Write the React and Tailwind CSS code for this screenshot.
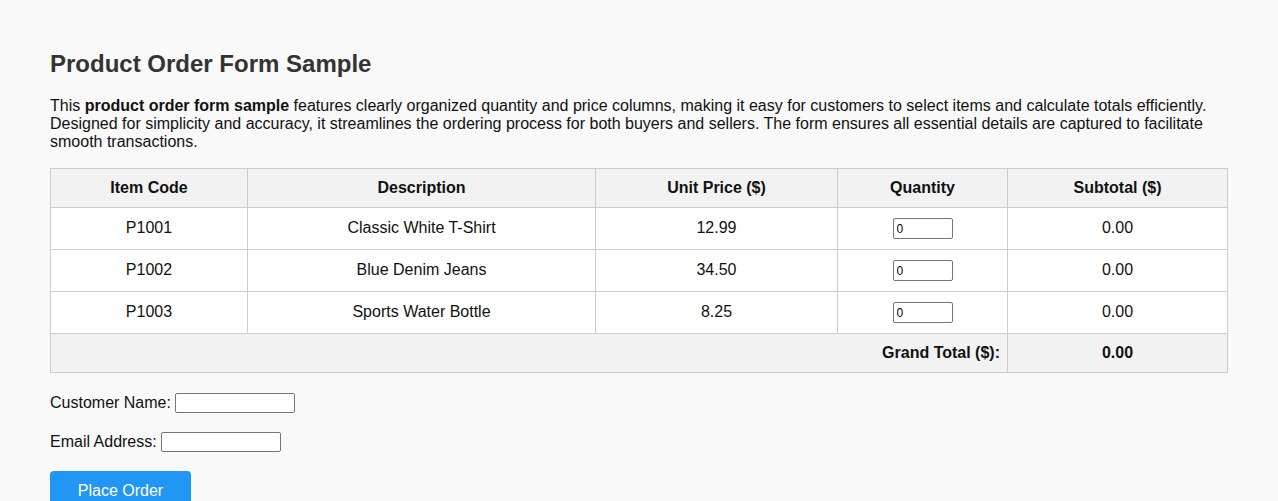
export default function App() {
  const rows = [
    ["P1001", "Classic White T-Shirt", "12.99"],
    ["P1002", "Blue Denim Jeans", "34.50"],
    ["P1003", "Sports Water Bottle", "8.25"],
  ];
  const cell = "border border-[#cccccc] px-[10px] py-[10px] text-center";
  const bodyCell = "border border-[#cccccc] px-[10px] pt-[9px] pb-[11px] text-center";
  return (
    <div className="min-h-[501px] bg-[#f9f9f9] px-[50px] pt-[50px] pb-[20px] text-[16px] text-[#111] font-['Liberation_Sans',Arial,sans-serif]">
      <h2 className="text-[24px] font-bold text-[#333333] leading-[28px] mb-[19px]">Product Order Form Sample</h2>
      <p className="leading-[18px] mb-[17px] text-[#111]">
        This <strong>product order form sample</strong> features clearly organized quantity and price columns, making it easy for customers to select items and calculate totals efficiently. Designed for simplicity and accuracy, it streamlines the ordering process for both buyers and sellers. The form ensures all essential details are captured to facilitate smooth transactions.
      </p>
      <table className="w-full border-collapse border border-[#cccccc] bg-white leading-[18px]">
        <thead>
          <tr className="bg-[#f2f2f2]">
            <th className={cell + " w-[197px] font-bold"}>Item Code</th>
            <th className={cell + " w-[348px] font-bold"}>Description</th>
            <th className={cell + " w-[242px] font-bold"}>Unit Price ($)</th>
            <th className={cell + " w-[170px] font-bold"}>Quantity</th>
            <th className={cell + " font-bold"}>Subtotal ($)</th>
          </tr>
        </thead>
        <tbody>
          {rows.map((r) => (
            <tr key={r[0]} className="h-[42px]">
              <td className={bodyCell}>{r[0]}</td>
              <td className={bodyCell}>{r[1]}</td>
              <td className={bodyCell}>{r[2]}</td>
              <td className={cell + " py-0"}>
                <input
                  type="text"
                  defaultValue="0"
                  className="w-[60px] h-[21px] border border-[#767676] rounded-[2px] bg-white px-[3px] text-[12px] leading-[14px] text-black align-middle"
                />
              </td>
              <td className={bodyCell}>0.00</td>
            </tr>
          ))}
          <tr className="bg-[#f2f2f2]">
            <td colSpan={4} className={cell + " text-right font-bold pr-[7px]"}>Grand Total ($):</td>
            <td className={cell + " font-bold"}>0.00</td>
          </tr>
        </tbody>
      </table>
      <div className="mt-[20px] flex items-center h-[20px]">
        <label className="leading-[18px]">Customer Name:</label>
        <input type="text" className="ml-[4px] w-[120px] h-[20px] border border-[#767676] rounded-[2px] bg-white" />
      </div>
      <div className="mt-[19px] flex items-center h-[20px]">
        <label className="leading-[18px]">Email Address:</label>
        <input type="text" className="ml-[4px] w-[120px] h-[20px] border border-[#767676] rounded-[2px] bg-white" />
      </div>
      <button className="mt-[19px] w-[141px] h-[40px] rounded-[4px] bg-[#2196f3] text-white text-[16px] leading-[18px]">Place Order</button>
    </div>
  );
}
